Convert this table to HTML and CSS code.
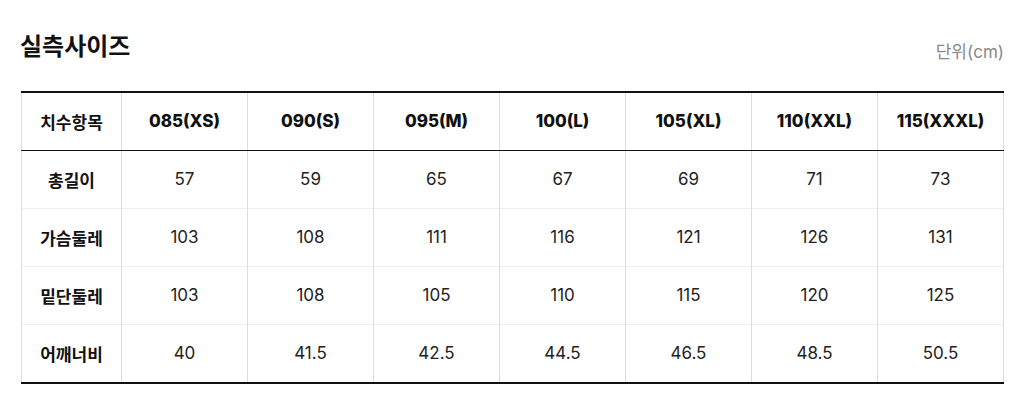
FILE: index.html
```html
<!DOCTYPE html>
<html lang="ko">
<head>
  <meta charset="UTF-8" />
  <title>실측사이즈</title>
  <link rel="stylesheet" href="styles.css">
</head>
<body>
  <div class="size-box">
    <div class="size-head">
      <h2 class="size-title">실측사이즈</h2>
      <span class="size-unit">단위(cm)</span>
    </div>

    <table class="size-table">
      <colgroup>
        <col class="col-label">
        <col span="7">
      </colgroup>
      <thead>
        <tr>
          <th>치수항목</th>
          <th>085(XS)</th>
          <th>090(S)</th>
          <th>095(M)</th>
          <th>100(L)</th>
          <th>105(XL)</th>
          <th>110(XXL)</th>
          <th>115(XXXL)</th>
        </tr>
      </thead>
      <tbody>
        <tr>
          <th>총길이</th>
          <td>57</td><td>59</td><td>65</td><td>67</td><td>69</td><td>71</td><td>73</td>
        </tr>
        <tr>
          <th>가슴둘레</th>
          <td>103</td><td>108</td><td>111</td><td>116</td><td>121</td><td>126</td><td>131</td>
        </tr>
        <tr>
          <th>밑단둘레</th>
          <td>103</td><td>108</td><td>105</td><td>110</td><td>115</td><td>120</td><td>125</td>
        </tr>
        <tr>
          <th>어깨너비</th>
          <td>40</td><td>41.5</td><td>42.5</td><td>44.5</td><td>46.5</td><td>48.5</td><td>50.5</td>
        </tr>
      </tbody>
    </table>
  </div>
</body>
</html>
```

FILE: styles.css
```css
* {
  margin: 0;
  padding: 0;
  box-sizing: border-box;
}

body {
  background: #fff;
  color: #111;
  font-family: Inter, "Noto Sans CJK KR", sans-serif;
}

.size-box {
  width: 983px;
  margin-left: 21px;
}

.size-head {
  display: flex;
  justify-content: space-between;
  align-items: flex-start;
  height: 91px;
  padding-top: 30px;
}

.size-title {
  margin-left: -1px;
  font-family: "Noto Sans CJK KR", sans-serif;
  font-size: 24px;
  font-weight: 700;
  color: #111;
  line-height: 30px;
}

.size-unit {
  margin-top: 10px;
  font-size: 17px;
  color: #888;
  line-height: 24px;
}

.size-table {
  width: 983px;
  border-collapse: collapse;
  table-layout: fixed;
  border-top: 2px solid #111;
  border-bottom: 2px solid #111;
}

.col-label {
  width: 100px;
}

.size-table th,
.size-table td {
  height: 58px;
  text-align: center;
  vertical-align: middle;
  border-left: 1px solid #ddd;
  border-right: 1px solid #ddd;
  border-top: 1px solid #eee;
  font-size: 17px;
}

.size-table thead th {
  font-weight: 800;
  color: #111;
  border-bottom: 1.5px solid #111;
}

.size-table thead th:first-child,
.size-table tbody th {
  font-family: "Noto Sans CJK KR", sans-serif;
  font-weight: 700;
  font-size: 17px;
}

.size-table tbody tr:last-child th,
.size-table tbody tr:last-child td {
  height: 59px;
}

.size-table td {
  color: #222;
  font-weight: 400;
}
```
